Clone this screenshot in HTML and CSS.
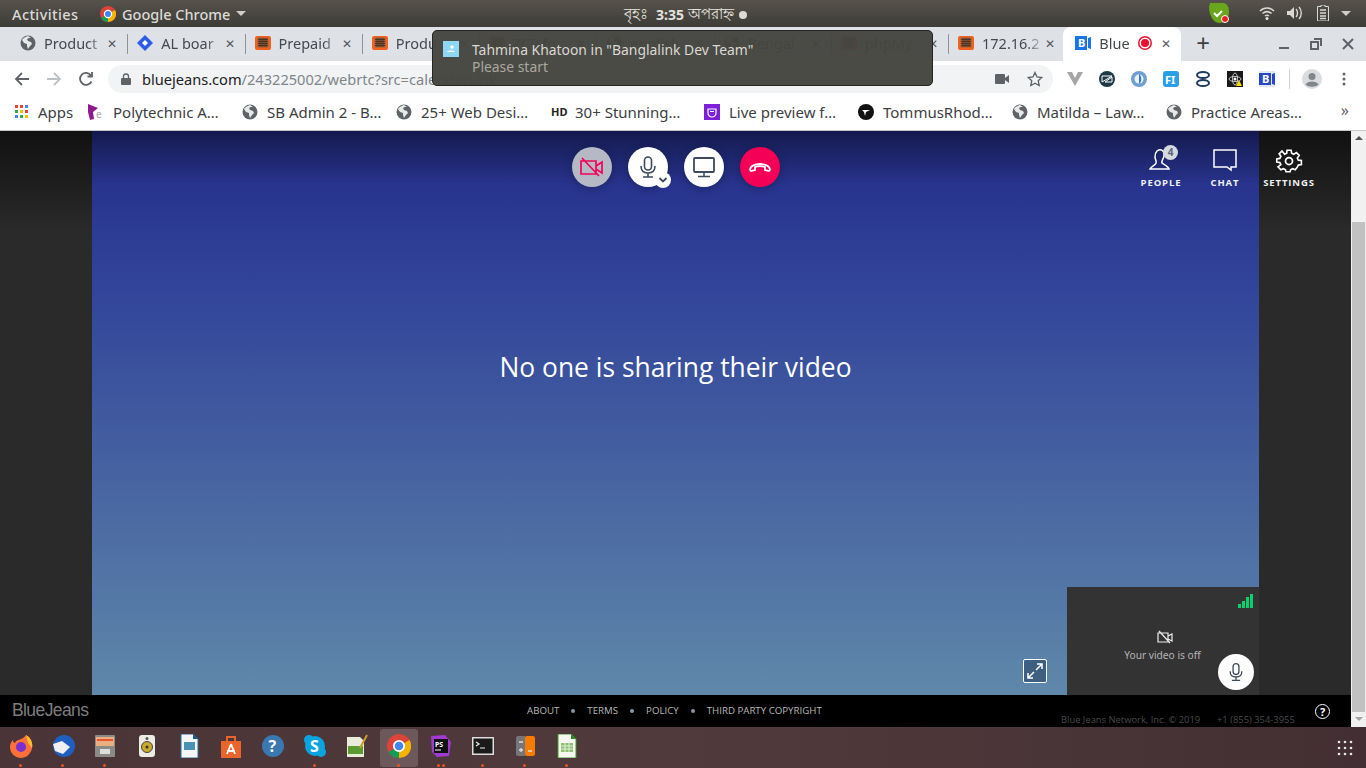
FILE: index.html
```html
<!DOCTYPE html>
<html lang="en">
<head>
    <meta charset="UTF-8">
    <title>BlueJeans</title>
    <link rel="stylesheet" href="styles.css">
</head>
<body>
    <svg class="defs" width="0" height="0">
        <symbol id="globe" viewBox="0 0 16 16"><circle cx="8" cy="8" r="7.5" fill="#5f6368"/><path d="M8 1C5 2 3 3 2 5l2 3 3 1 0 2 1 3 2-3 2-2-1-2-3-1-1-2 2-1 2 0z" fill="#fff" opacity=".85"/></symbol>
        <symbol id="ticket" viewBox="0 0 16 16"><rect y="1" width="16" height="14" rx="2" fill="#f4601e"/><rect x="2.500" y="2.500" width="11" height="10" fill="#9a6238"/><path d="M3 4.500h10M3 6.500h10M3 8.500h10M3 10.500h10M5 3v9M7 3v9M9 3v9M11 3v9" stroke="#3a2a20" stroke-width=".7"/></symbol>
        <symbol id="mic" viewBox="0 0 24 24"><rect x="8.500" y="2" width="7" height="13" rx="3.500" fill="none" stroke="currentColor" stroke-width="1.600"/><path d="M5 11c0 5 3 7 7 7s7-2 7-7M12 18v4M7 22h10" fill="none" stroke="currentColor" stroke-width="1.600"/></symbol>
    </svg>

    <!-- gnome bar -->
    <header class="topbar">
        <span class="activities">Activities</span>
        <span class="app-menu">
            <svg width="16" height="16" viewBox="0 0 16 16"><circle cx="8" cy="8" r="8" fill="#db4437"/><path d="M8 8L1 12a8 8 0 0 0 7 4z" fill="#0f9d58"/><path d="M8 8l7-4a8 8 0 0 1-3 11l-4 1z" fill="#f4b400"/><circle cx="8" cy="8" r="3.600" fill="#4285f4" stroke="#fff" stroke-width="1.200"/></svg>
            Google Chrome
            <i class="caret"></i>
        </span>
        <span class="clock"><span class="bn">বৃহঃ</span> <b>3:35</b> <span class="bn">অপরাহ্ন</span><i class="clock-dot"></i></span>
        <span class="tray">
            <svg class="tray-shield" width="24" height="24" viewBox="0 0 24 24"><path d="M3 2h13c4 0 6 4 6 9 0 6-4 11-10 11C6 22 2 13 2 6z" fill="#6aa51e"/><path d="M7 12l3 3 5-5" fill="none" stroke="#fff" stroke-width="2"/><circle cx="18" cy="18" r="3.500" fill="#e52020" stroke="#fff"/></svg>
            <svg class="tray-wifi" width="16" height="14" viewBox="0 0 16 14"><path d="M1 5c4-4 10-4 14 0M3.500 7.500c3-2.500 6-2.500 9 0M6 10c1.300-1 2.700-1 4 0" fill="none" stroke="#d8d8d4" stroke-width="1.500"/><circle cx="8" cy="12.500" r="1.500" fill="#e8e8e4"/></svg>
            <svg class="tray-vol" width="16" height="14" viewBox="0 0 16 14"><path d="M0 5h3l4-4v12l-4-4H0z" fill="#d8d8d4"/><path d="M9 3c2 2 2 6 0 8M12 1c3 3 3 9 0 12" fill="none" stroke="#d8d8d4" stroke-width="1.400"/></svg>
            <svg class="tray-batt" width="12" height="16" viewBox="0 0 12 16"><path d="M4 0h4v1.500h3.500V16H.5V1.500H4z" fill="none" stroke="#d8d8d4"/><path d="M3 5h6M3 8h6M3 11h6M3 13.500h6" stroke="#d8d8d4" stroke-width="1.500"/></svg>
            <i class="caret"></i>
        </span>
    </header>

    <!-- chrome tabs -->
    <nav class="tabstrip">
        <div class="tab"><svg class="fav"><use href="#globe"/></svg><span class="tab-title">Product</span><span class="tab-x">✕</span></div>
        <div class="tab"><svg class="fav" viewBox="0 0 16 16"><path d="M8 0l8 8-8 8-8-8z" fill="#2f5bea"/><path d="M8 5l3 3-3 3-3-3z" fill="#fff"/></svg><span class="tab-title">AL boar</span><span class="tab-x">✕</span></div>
        <div class="tab"><svg class="fav"><use href="#ticket"/></svg><span class="tab-title">Prepaid</span><span class="tab-x">✕</span></div>
        <div class="tab"><svg class="fav"><use href="#ticket"/></svg><span class="tab-title">Produ</span><span class="tab-x">✕</span></div>
        <div class="tab tab-under"><svg class="fav"><use href="#ticket"/></svg><span class="tab-title">ZCP fo</span><span class="tab-x">✕</span></div>
        <div class="tab tab-under"><svg class="fav"><use href="#globe"/></svg><span class="tab-title">english</span><span class="tab-x">✕</span></div>
        <div class="tab tab-under"><svg class="fav"><use href="#globe"/></svg><span class="tab-title">Bengal</span><span class="tab-x">✕</span></div>
        <div class="tab tab-under"><svg class="fav"><use href="#ticket"/></svg><span class="tab-title">phpMy</span><span class="tab-x">✕</span></div>
        <div class="tab"><svg class="fav"><use href="#ticket"/></svg><span class="tab-title">172.16.2</span><span class="tab-x">✕</span></div>
        <div class="tab tab-active"><svg class="fav" viewBox="0 0 16 16"><rect width="12" height="14" y="1" fill="#1a73e8"/><path d="M13 3l3-1v12l-3-1z" fill="#1a73e8"/><text x="3" y="12" class="fav-b">B</text></svg><span class="tab-title">Blue</span><i class="rec"></i><span class="tab-x">✕</span></div>
        <span class="newtab">+</span>
        <span class="winbtns">
            <svg width="12" height="12" viewBox="0 0 12 12"><path d="M1 10h10" stroke="#5f6368" stroke-width="2"/></svg>
            <svg width="12" height="12" viewBox="0 0 12 12"><path d="M4 1h7v7M1 4h7v7H1z" fill="none" stroke="#5f6368" stroke-width="2"/></svg>
            <svg width="12" height="12" viewBox="0 0 12 12"><path d="M1 1l10 10M11 1L1 11" stroke="#5f6368" stroke-width="2"/></svg>
        </span>
    </nav>

    <!-- chrome toolbar -->
    <div class="toolbar">
        <svg class="navbtn" viewBox="0 0 16 16"><path d="M15 8H2M8 2L2 8l6 6" fill="none" stroke="#5f6368" stroke-width="1.800"/></svg>
        <svg class="navbtn" viewBox="0 0 16 16"><path d="M1 8h13M8 2l6 6-6 6" fill="none" stroke="#bdc1c6" stroke-width="1.800"/></svg>
        <svg class="navbtn" viewBox="0 0 16 16"><path d="M13.500 10.500A6 6 0 1 1 13 4.500M14 1v4.500H9.500" fill="none" stroke="#5f6368" stroke-width="1.800"/></svg>
        <div class="omnibox">
            <svg class="lock" width="10" height="12" viewBox="0 0 10 12"><path d="M2.500 5V3.500a2.500 2.500 0 0 1 5 0V5" fill="none" stroke="#5f6368" stroke-width="1.300"/><rect y="5" width="10" height="7" rx="1" fill="#5f6368"/></svg>
            <span class="url"><span class="url-host">bluejeans.com</span>/243225002/webrtc?src=calendarLink</span>
            <svg class="omni-cam" width="14" height="10" viewBox="0 0 14 10"><rect width="10" height="10" rx="1" fill="#5f6368"/><path d="M10 4l4-3v8l-4-3z" fill="#5f6368"/></svg>
            <svg class="omni-star" width="16" height="16" viewBox="0 0 16 16"><path d="M8 1.500l2 4.500 4.800.5-3.600 3.200 1 4.800L8 12.200l-4.200 2.300 1-4.800L1.200 6.500 6 6z" fill="none" stroke="#5f6368" stroke-width="1.300"/></svg>
        </div>
        <div class="exts">
            <svg viewBox="0 0 16 16"><path d="M0 1h5l3 6 3-6h5l-8 14z" fill="#a6a6a6"/></svg>
            <svg viewBox="0 0 16 16"><circle cx="8" cy="8" r="8" fill="#1f3a47"/><path d="M3 11V5h10zM13 6v5H6z" fill="none" stroke="#fff"/></svg>
            <svg viewBox="0 0 16 16"><circle cx="8" cy="8" r="8" fill="#6f9fd0"/><circle cx="8" cy="8" r="4.500" fill="#e8f0f8"/><path d="M8 3c3 2 3 8 0 10z" fill="#3c78b5"/></svg>
            <svg viewBox="0 0 16 16"><rect width="16" height="16" rx="3" fill="#2b9fe6"/><text x="2" y="12.500" class="ext-txt">FI</text></svg>
            <svg viewBox="0 0 16 16"><ellipse cx="8" cy="4" rx="6" ry="3" fill="none" stroke="#1f3a5f" stroke-width="2"/><ellipse cx="8" cy="12" rx="6" ry="3" fill="none" stroke="#1f3a5f" stroke-width="2"/></svg>
            <svg viewBox="0 0 16 16"><rect width="16" height="16" fill="#1a1a1a"/><circle cx="8" cy="8" r="1.500" fill="#fff"/><ellipse cx="8" cy="8" rx="6" ry="2.500" fill="none" stroke="#fff" stroke-width=".7"/><ellipse cx="8" cy="8" rx="2.500" ry="6" fill="none" stroke="#fff" stroke-width=".7"/><path d="M12 9l3 6H9z" fill="#f5d90a"/></svg>
            <svg viewBox="0 0 16 16"><rect width="16" height="16" fill="#dfe8f5"/><rect y="2" width="12" height="12" fill="#2747c9"/><path d="M13 3l3-1v12l-3-1z" fill="#2747c9"/><text x="3" y="12" class="fav-b">B</text></svg>
        </div>
        <i class="tool-sep"></i>
        <svg class="avatar" width="20" height="20" viewBox="0 0 20 20"><circle cx="10" cy="10" r="10" fill="#dadce0"/><circle cx="10" cy="7.500" r="3.500" fill="#80868b"/><path d="M3.500 15.500c2-4 11-4 13 0-3 3-10 3-13 0z" fill="#80868b"/></svg>
        <svg class="kebab" width="4" height="14" viewBox="0 0 4 14"><circle cx="2" cy="2" r="1.500" fill="#5f6368"/><circle cx="2" cy="7" r="1.500" fill="#5f6368"/><circle cx="2" cy="12" r="1.500" fill="#5f6368"/></svg>
    </div>

    <!-- bookmarks -->
    <div class="bookmarks">
        <span class="bm bm-apps">
            <svg class="bm-ico" viewBox="0 0 14 14"><g fill="#ea4335"><rect width="3" height="3"/><rect x="5" width="3" height="3"/></g><rect x="10" width="3" height="3" fill="#4285f4"/><rect y="5" width="3" height="3" fill="#34a853"/><rect x="5" y="5" width="3" height="3" fill="#fbbc05"/><rect x="10" y="5" width="3" height="3" fill="#ea4335"/><rect y="10" width="3" height="3" fill="#4285f4"/><rect x="5" y="10" width="3" height="3" fill="#34a853"/><rect x="10" y="10" width="3" height="3" fill="#fbbc05"/></svg>Apps</span>
        <span class="bm"><svg class="bm-ico" viewBox="0 0 16 16"><path d="M0 0l10 4-5 4 1 7-4 1-2-8z" fill="#8e1a8e"/><text x="8" y="14" class="bm-e">e</text></svg>Polytechnic A…</span>
        <span class="bm"><svg class="bm-ico"><use href="#globe"/></svg>SB Admin 2 - B…</span>
        <span class="bm"><svg class="bm-ico"><use href="#globe"/></svg>25+ Web Desi…</span>
        <span class="bm"><b class="bm-hd">HD</b>30+ Stunning…</span>
        <span class="bm"><svg class="bm-ico" viewBox="0 0 16 16"><rect width="16" height="16" fill="#7b1fd8"/><path d="M4 5h8v4a4 4 0 0 1-8 0z" fill="none" stroke="#fff" stroke-width="1.200"/><path d="M6 7.500h4" stroke="#fff"/></svg>Live preview f…</span>
        <span class="bm"><svg class="bm-ico" viewBox="0 0 16 16"><circle cx="8" cy="8" r="8" fill="#111"/><path d="M4 6h8L8 8l-1 4-1-4z" fill="#fff"/></svg>TommusRhod…</span>
        <span class="bm"><svg class="bm-ico"><use href="#globe"/></svg>Matilda – Law…</span>
        <span class="bm"><svg class="bm-ico"><use href="#globe"/></svg>Practice Areas…</span>
        <span class="bm-more">»</span>
    </div>

    <!-- notification over chrome -->
    <div class="notify">
        <span class="notify-icon"><svg width="10" height="8" viewBox="0 0 10 8"><circle cx="6" cy="2" r="1.800" fill="#fff"/><path d="M1 7c0-2 8-2 8 0z" fill="#fff"/></svg></span>
        <div>
            <div class="notify-title">Tahmina Khatoon in "Banglalink Dev Team"</div>
            <div class="notify-body">Please start</div>
        </div>
    </div>

    <div class="page">
        <div class="app">
            <main class="meeting">
                <aside class="side"></aside>
                <section class="stage">
                    <div class="controls">
                        <button class="ctl ctl-off">
                            <svg width="26" height="22" viewBox="0 0 26 22"><path d="M2 5h15v13H2zM17 10l6-4v11l-6-4M3 2l17 18" fill="none" stroke="#f50057" stroke-width="1.700"/></svg>
                        </button>
                        <button class="ctl ctl-mic">
                            <svg width="24" height="24"><use href="#mic"/></svg>
                            <span class="mic-more"><svg width="10" height="8" viewBox="0 0 10 8"><path d="M1.500 2l3.500 3.500L8.500 2" fill="none" stroke="#3d4a5c" stroke-width="1.800"/></svg></span>
                        </button>
                        <button class="ctl">
                            <svg width="24" height="24" viewBox="0 0 24 24"><rect x="2" y="3" width="20" height="14" rx="1" fill="none" stroke="currentColor" stroke-width="1.800"/><path d="M12 17v4M6 21.500h12" stroke="currentColor" stroke-width="1.500"/></svg>
                        </button>
                        <button class="ctl ctl-end">
                            <svg width="24" height="12" viewBox="0 0 24 12"><path d="M2 9c0-8 20-8 20 0l-1 1-4-1V6C14 5 10 5 7 6v3l-4 1z" fill="none" stroke="#fff" stroke-width="1.800"/></svg>
                        </button>
                    </div>
                    <p class="no-video">No one is sharing their video</p>
                    <span class="expand">
                        <svg width="16" height="16" viewBox="0 0 16 16"><path d="M9 7l6-6M10 1h5v5M7 9l-6 6M1 10v5h5" fill="none" stroke="#fff" stroke-width="1.500"/></svg>
                    </span>
                    <div class="selfview">
                        <span class="signal"><i class="s1"></i><i class="s2"></i><i class="s3"></i><i class="s4"></i></span>
                        <svg class="self-cam" width="16" height="14" viewBox="0 0 16 14"><path d="M1 3h10v9H1zM11 6l4-2v7l-4-2M2 1l11 12" fill="none" stroke="#eee" stroke-width="1.200"/></svg>
                        <span class="self-text">Your video is off</span>
                        <span class="self-mic"><svg width="20" height="20"><use href="#mic"/></svg></span>
                    </div>
                </section>
                <aside class="side"></aside>
                <div class="actions">
                    <div class="action">
                        <svg width="28" height="28" viewBox="0 0 28 28"><path d="M10 4c4-3 8 0 7 5-.5 3-3 5-2 7 1 1 6 3 7 6H3c1-3 6-4 6-6 1-2-1-3-1-6 0-3 1-5 2-6z" fill="none" stroke="#fff" stroke-width="1.500"/></svg>
                        <span class="badge">4</span>
                        PEOPLE
                    </div>
                    <div class="action">
                        <svg width="28" height="28" viewBox="0 0 28 28"><path d="M3 3h22v17h-5v3l-4-3H3z" fill="none" stroke="#fff" stroke-width="1.500"/></svg>
                        CHAT
                    </div>
                    <div class="action">
                        <svg width="28" height="28" viewBox="0 0 24 24"><path d="M10 2h4l.5 3 2 1 2.600-1.700 2.800 2.800L20 9.700l1 2 3 .3v4l-3 .5-1 2-2 2.500-2.500-1-2 1-.5 2h-4l-.5-2-2-1-2.500 1-2.800-2.800L4 16l-1-2-3-.5v-3l3-.5 1-2-1.700-2.500 2.800-2.800L7.700 6l2-1z" transform="translate(1.500 1) scale(.88)" fill="none" stroke="#fff" stroke-width="1.600"/><circle cx="12" cy="12" r="3" fill="none" stroke="#fff" stroke-width="1.500"/></svg>
                        SETTINGS
                    </div>
                </div>
            </main>
            <footer class="foot">
                <span class="logo">BlueJeans</span>
                <nav class="foot-links">
                    <span>ABOUT</span><i></i><span>TERMS</span><i></i><span>POLICY</span><i></i><span>THIRD PARTY COPYRIGHT</span>
                </nav>
                <span class="legal">Blue Jeans Network, Inc. © 2019</span>
                <span class="phone">+1 (855) 354-3955</span>
                <span class="help">?</span>
            </footer>
        </div>
        <div class="scrollbar">
            <i class="arrow-up"></i>
            <div class="thumb"></div>
            <i class="arrow-down"></i>
        </div>
    </div>

    <!-- dock -->
    <footer class="dock">
        <span class="dock-item dot"><svg viewBox="0 0 24 24"><path d="M17 1c5 3 7 8 6 13-1 6-6 10-11 10S1 20 1 13c0-3 1-5 3-7 0 2 1 3 2 3 1-3 4-3 6-4 2-1 4-2 5-4z" fill="#ff7139"/><path d="M17 1c5 3 7 8 6 13l-4-5z" fill="#ffbd2e"/><circle cx="12" cy="13" r="5" fill="#7a2fd0"/></svg></span>
        <span class="dock-item dot"><svg viewBox="0 0 24 24"><circle cx="13" cy="12" r="11" fill="#1f5fbf"/><path d="M2 10l9-3 8 6-7 7-8-3z" fill="#f0f0f0"/></svg></span>
        <span class="dock-item dot"><svg viewBox="0 0 24 24"><rect x="2" y="1" width="20" height="22" rx="1" fill="#8a8a86"/><rect x="3" y="3" width="18" height="9" fill="#e8b080"/><path d="M4 6h16" stroke="#e8552c" stroke-width="2"/><rect x="7" y="15" width="10" height="5" fill="#ddd"/></svg></span>
        <span class="dock-item"><svg viewBox="0 0 24 24"><rect x="4" y="1" width="16" height="22" rx="3" fill="#ecebe4"/><circle cx="12" cy="13" r="5.500" fill="#c9a82c" stroke="#444"/><circle cx="12" cy="13" r="1.500" fill="#333"/><circle cx="12" cy="4.500" r="1.500" fill="#555"/></svg></span>
        <span class="dock-item"><svg viewBox="0 0 24 24"><path d="M4 0h12l5 5v19H4z" fill="#f4f6f8" stroke="#2a6f9c"/><path d="M16 0l5 5h-5z" fill="#1a5a88"/><rect x="7" y="8" width="11" height="8" fill="#4a90b8"/></svg></span>
        <span class="dock-item"><svg viewBox="0 0 24 24"><path d="M2 7h20v17H2z" fill="#e8662c"/><path d="M8 8V3h8v5" fill="none" stroke="#e8662c" stroke-width="2"/><path d="M12 10l-4 10M12 10l4 10M8 17h8" stroke="#fff" stroke-width="1.800"/></svg></span>
        <span class="dock-item"><svg viewBox="0 0 24 24"><circle cx="12" cy="12" r="11" fill="#3a78b0"/><text x="7.500" y="18" class="dock-q">?</text></svg></span>
        <span class="dock-item dot"><svg viewBox="0 0 24 24"><circle cx="12" cy="12" r="10" fill="#0aa5e0"/><circle cx="6" cy="6" r="5" fill="#0aa5e0"/><circle cx="18" cy="18" r="5" fill="#0aa5e0"/><text x="7" y="18" class="dock-s">S</text></svg></span>
        <span class="dock-item"><svg viewBox="0 0 24 24"><path d="M2 3h13l4 4v16H2z" fill="#e8ecd8"/><path d="M3 12h15v8H3z" fill="#5a9a30"/><path d="M22 1l-7 13" stroke="#c89a30" stroke-width="2"/></svg></span>
        <span class="dock-item dock-active dot"><svg viewBox="0 0 24 24"><circle cx="12" cy="12" r="12" fill="#db4437"/><path d="M12 12L1.500 18A12 12 0 0 0 12 24z" fill="#0f9d58"/><path d="M12 12l10.500-6A12 12 0 0 1 17 23l-5 1z" fill="#f4b400"/><circle cx="12" cy="12" r="5.200" fill="#4285f4" stroke="#fff" stroke-width="1.800"/></svg></span>
        <span class="dock-item dot dot-two"><svg viewBox="0 0 24 24"><path d="M2 2l14-1 6 7-2 14-12 1-5-5z" fill="#a03ad0"/><rect x="5" y="5" width="14" height="14" fill="#111"/><text x="6" y="13" class="dock-ps">PS</text><path d="M6 16h6" stroke="#fff"/></svg></span>
        <span class="dock-item dot"><svg viewBox="0 0 24 24"><rect x="1" y="3" width="22" height="18" fill="#ddd"/><rect x="2.500" y="4.500" width="19" height="15" fill="#1a1a1a"/><path d="M5 8l3 2-3 2M9 14h5" fill="none" stroke="#eee" stroke-width="1.200"/></svg></span>
        <span class="dock-item dot"><svg viewBox="0 0 24 24"><rect x="3" y="2" width="10" height="20" rx="2" fill="#76767a"/><rect x="12" y="2" width="10" height="20" rx="2" fill="#f57c00"/><path d="M6 8h4M6 16h4M8 14v4M15 17h4" stroke="#ddd" stroke-width="1.300"/></svg></span>
        <span class="dock-item dot"><svg viewBox="0 0 24 24"><path d="M3 0h13l5 5v19H3z" fill="#f4f8ee" stroke="#3a9a30"/><path d="M16 0l5 5h-5z" fill="#2a8a20"/><path d="M6 9h12v9H6z" fill="#8dc070"/><path d="M6 12h12M6 15h12M10 9v9M14 9v9" stroke="#fff" stroke-width=".7"/></svg></span>
        <svg class="dock-grid" width="16" height="16" viewBox="0 0 16 16"><g fill="#e8e8e8"><circle cx="2" cy="2" r="1.300"/><circle cx="8" cy="2" r="1.300"/><circle cx="14" cy="2" r="1.300"/><circle cx="2" cy="8" r="1.300"/><circle cx="8" cy="8" r="1.300"/><circle cx="14" cy="8" r="1.300"/><circle cx="2" cy="14" r="1.300"/><circle cx="8" cy="14" r="1.300"/><circle cx="14" cy="14" r="1.300"/></g></svg>
    </footer>
</body>
</html>
```

FILE: styles.css
```css
html, body {
    margin: 0;
    height: 100%;
    overflow: hidden;
}
body {
    width: 1366px;
    height: 768px;
    display: flex;
    flex-direction: column;
    position: relative;
    font-family: "Noto Sans", "Open Sans", sans-serif;
    background: #000;
}
.defs {
    position: absolute;
}

/* gnome bar */
.topbar {
    height: 27px;
    flex: none;
    display: flex;
    align-items: center;
    position: relative;
    background: linear-gradient(#57534c, #3c3b37);
    color: #dcdad5;
    font-size: 14.500px;
    font-weight: 500;
    padding-left: 12px;
}
.activities {
    width: 88px;
    letter-spacing: .4px;
}
.app-menu {
    display: flex;
    align-items: center;
    gap: 6px;
}
.caret {
    width: 0;
    height: 0;
    border-left: 5px solid transparent;
    border-right: 5px solid transparent;
    border-top: 5px solid #d0cec8;
}
.clock {
    position: absolute;
    left: 624px;
    top: 2px;
    display: flex;
    align-items: center;
    gap: 8px;
    font-size: 14px;
    color: #e4e2dd;
}
.clock .bn {
    font-size: 15px;
    font-weight: 400;
}
.clock b + .bn {
    margin-left: -4px;
}
.clock-dot {
    width: 8px;
    height: 8px;
    border-radius: 50%;
    background: #dcdad5;
    margin-left: -3px;
}
.tray {
    position: absolute;
    left: 1207px;
    top: 1px;
    display: flex;
    align-items: center;
}
.tray-wifi {
    margin-left: 28px;
}
.tray-vol {
    margin-left: 12px;
}
.tray-batt {
    margin-left: 14px;
}
.tray .caret {
    margin-left: 12px;
}

/* chrome */
.tabstrip {
    height: 34px;
    flex: none;
    display: flex;
    padding-left: 8px;
    background: #dee1e6;
    position: relative;
    color: #45494e;
    font-size: 14.500px;
}
.tab {
    width: 117.250px;
    flex: none;
    box-sizing: border-box;
    display: flex;
    align-items: center;
    padding: 0 8px 2px 12px;
    position: relative;
}
.tab + .tab::before {
    content: "";
    position: absolute;
    left: 2px;
    top: 7px;
    height: 20px;
    width: 1px;
    background: #8f9296;
}
.fav {
    width: 16px;
    height: 16px;
    flex: none;
}
.fav-b {
    font-size: 11px;
    font-weight: 700;
    fill: #fff;
}
.tab-title {
    margin-left: 8px;
    flex: 1;
    white-space: nowrap;
    -webkit-mask-image: linear-gradient(to right, #000 70%, transparent);
    mask-image: linear-gradient(to right, #000 70%, transparent);
}
.tab-x {
    font-size: 12px;
    color: #55585c;
}
.tab-active {
    background: #fff;
    border-radius: 8px 8px 0 0;
    width: 118px;
    padding-right: 10px;
}
.tab-active::before {
    display: none;
}
.rec {
    width: 8px;
    height: 8px;
    border-radius: 50%;
    flex: none;
    background: #e8112d;
    box-shadow: 0 0 0 1.500px #fff, 0 0 0 3px #e8112d;
    margin-right: 12px;
}
.newtab {
    margin-left: 15px;
    font-size: 24px;
    line-height: 32px;
    color: #3c4043;
}
.winbtns {
    position: absolute;
    right: 12px;
    top: 11px;
    display: flex;
    gap: 20px;
}
.toolbar {
    height: 35px;
    flex: none;
    display: flex;
    align-items: center;
    background: #fff;
    padding-left: 14px;
    box-sizing: border-box;
}
.navbtn {
    width: 16px;
    height: 16px;
    margin-right: 16px;
    flex: none;
}
.omnibox {
    margin-left: -2px;
    width: 945px;
    height: 28px;
    flex: none;
    border-radius: 14px;
    background: #f1f3f4;
    display: flex;
    align-items: center;
    padding-left: 13px;
    box-sizing: border-box;
    font-size: 14.600px;
    color: #80868b;
}
.url {
    margin-left: 11px;
    flex: 1;
    white-space: nowrap;
}
.url-host {
    color: #202124;
}
.omni-star {
    margin: 0 10px 0 18px;
}
.exts {
    display: flex;
    gap: 16px;
    margin-left: 14px;
}
.exts svg {
    width: 16px;
    height: 16px;
}
.ext-txt {
    font-size: 11px;
    font-weight: 700;
    fill: #fff;
}
.tool-sep {
    width: 1px;
    height: 20px;
    background: #d0d2d6;
    margin: 0 12px 0 14px;
}
.avatar {
    margin-right: 20px;
}
.bookmarks {
    height: 35px;
    flex: none;
    box-sizing: border-box;
    display: flex;
    align-items: center;
    background: #fff;
    border-bottom: 1px solid #c4c6ca;
    font-size: 15px;
    color: #3c4043;
    padding: 0 0 3px 14px;
    position: relative;
}
.bm {
    width: 154px;
    flex: none;
    display: flex;
    align-items: center;
    gap: 9px;
    white-space: nowrap;
}
.bm-apps {
    width: 75px;
    gap: 9px;
}
.bm-ico {
    width: 16px;
    height: 16px;
    flex: none;
    margin-left: -1px;
}
.bm-apps .bm-ico {
    width: 14px;
    height: 14px;
    margin-left: 1px;
}
.bm-e {
    font-size: 10px;
    fill: #aaa;
}
.bm-hd {
    font-size: 11px;
    color: #222;
    width: 15px;
}
.bm-more {
    position: absolute;
    right: 17px;
    top: 3px;
    font-size: 16px;
    color: #5f6368;
}

/* notification */
.notify {
    position: absolute;
    left: 432px;
    top: 30px;
    width: 501px;
    height: 56px;
    box-sizing: border-box;
    background: rgba(69, 69, 64, .97);
    border: 1px solid #26251f;
    border-radius: 5px;
    display: flex;
    padding: 8px 10px;
    gap: 13px;
    font-size: 13.900px;
    line-height: 17px;
    color: #dbd9d3;
}
.notify-icon {
    width: 16px;
    height: 16px;
    margin-top: 2px;
    flex: none;
    background: #8fd8f5;
    display: flex;
    align-items: center;
    justify-content: center;
}
.notify-title {
    margin-top: 2px;
}
.notify-body {
    color: #aaa89e;
}

/* bluejeans */
.page {
    flex: 1;
    display: flex;
    min-height: 0;
}
.app {
    flex: 1;
    display: flex;
    flex-direction: column;
    min-width: 0;
}
.meeting {
    flex: 1;
    display: flex;
    position: relative;
    min-height: 0;
}
.side {
    width: 92px;
    flex: none;
    background: linear-gradient(#111 0, #2a2a2a 100px, #2a2a2a 100%);
}
.stage {
    flex: 1;
    position: relative;
    display: flex;
    flex-direction: column;
    align-items: center;
    background: linear-gradient(#141a4e 0, #28348f 55px, #33469a 170px, #5f88aa 100%);
}
.controls {
    display: flex;
    gap: 16px;
    margin-top: 16px;
}
.ctl {
    width: 40px;
    height: 40px;
    border: 0;
    padding: 0;
    border-radius: 50%;
    background: #fff;
    color: #3d4a5c;
    display: flex;
    align-items: center;
    justify-content: center;
    position: relative;
    box-shadow: 0 2px 8px rgba(0, 0, 0, .25);
}
.ctl-off {
    background: #b4b9c5;
}
.ctl-end {
    background: #f50057;
}
.mic-more {
    position: absolute;
    right: -3px;
    bottom: -1px;
    width: 16px;
    height: 16px;
    border-radius: 50%;
    background: #fff;
    display: flex;
    align-items: center;
    justify-content: center;
}
.no-video {
    margin: 165px 0 0;
    font-family: "Open Sans", sans-serif;
    font-size: 26.400px;
    line-height: 30px;
    color: #fff;
}
.expand {
    position: absolute;
    left: 931px;
    top: 528px;
    width: 22px;
    height: 22px;
    border: 1px solid #fff;
    border-radius: 2px;
    background: #3f5f80;
    display: flex;
    align-items: center;
    justify-content: center;
}
.selfview {
    position: absolute;
    right: 0;
    bottom: 0;
    width: 192px;
    height: 108px;
    background: #333;
    display: flex;
    flex-direction: column;
    align-items: center;
    color: #b5b5b5;
    font-size: 10.200px;
}
.self-cam {
    margin-top: 43px;
    margin-left: 4px;
}
.self-text {
    margin-top: 4px;
    margin-right: 1px;
}
.signal {
    position: absolute;
    right: 6px;
    top: 7px;
    display: flex;
    align-items: flex-end;
    gap: 1px;
    height: 14px;
}
.signal i {
    width: 3px;
    background: #0bd06e;
}
.s1 { height: 4px; }
.s2 { height: 7px; }
.s3 { height: 11px; }
.s4 { height: 14px; }
.self-mic {
    position: absolute;
    right: 5px;
    bottom: 5px;
    width: 36px;
    height: 36px;
    border-radius: 50%;
    background: #fff;
    color: #3d4a5c;
    display: flex;
    align-items: center;
    justify-content: center;
}
.actions {
    position: absolute;
    right: 30px;
    top: 16px;
    display: flex;
}
.action {
    width: 64px;
    display: flex;
    flex-direction: column;
    align-items: center;
    position: relative;
    font-family: "Open Sans", sans-serif;
    font-size: 9.500px;
    font-weight: 700;
    letter-spacing: .9px;
    line-height: 15px;
    color: #eef0f5;
}
.badge {
    position: absolute;
    left: 34px;
    top: -2px;
    width: 15px;
    height: 15px;
    border-radius: 50%;
    background: #d5d9e0;
    color: #5a6578;
    font-size: 10px;
    letter-spacing: 0;
    line-height: 15px;
    text-align: center;
}
.foot {
    height: 32px;
    flex: none;
    position: relative;
    background: #000;
}
.logo {
    position: absolute;
    left: 12px;
    top: 5px;
    font-family: "Liberation Sans", sans-serif;
    font-size: 17.500px;
    letter-spacing: -.6px;
    color: #7d7d7d;
}
.foot-links {
    position: absolute;
    left: 527px;
    top: 9px;
    display: flex;
    align-items: center;
    gap: 12px;
    font-family: "Open Sans", sans-serif;
    font-size: 9.700px;
    line-height: 14px;
    color: #b8b8b8;
}
.foot-links i {
    width: 4px;
    height: 4px;
    border-radius: 50%;
    background: #8b94a5;
}
.legal, .phone {
    position: absolute;
    top: 18px;
    font-family: "Open Sans", sans-serif;
    font-size: 9.400px;
    line-height: 13px;
    color: #4a4a4a;
}
.legal {
    left: 1061px;
}
.phone {
    left: 1217px;
}
.help {
    position: absolute;
    left: 1315px;
    top: 9px;
    width: 13px;
    height: 13px;
    border: 1.500px solid #fff;
    border-radius: 50%;
    color: #fff;
    font-size: 11px;
    font-weight: 700;
    line-height: 13px;
    text-align: center;
}
.scrollbar {
    width: 15px;
    flex: none;
    background: #f1f1f1;
    display: flex;
    flex-direction: column;
    align-items: center;
}
.arrow-up, .arrow-down {
    width: 0;
    height: 0;
    border-left: 4px solid transparent;
    border-right: 4px solid transparent;
}
.arrow-up {
    margin-top: 5px;
    border-bottom: 4px solid #505050;
}
.arrow-down {
    margin-top: 5px;
    border-top: 4px solid #a3a3a3;
}
.thumb {
    width: 13px;
    margin-top: 82px;
    height: 490px;
    background: #c1c1c1;
}

/* dock */
.dock {
    height: 41px;
    flex: none;
    display: flex;
    align-items: center;
    position: relative;
    background: linear-gradient(90deg, #4a3437, #503a3c 50%, #432f33);
}
.dock-item {
    width: 42px;
    height: 38px;
    flex: none;
    display: flex;
    justify-content: center;
    align-items: center;
    box-sizing: border-box;
    position: relative;
    margin-top: 1px;
}
.dock-item svg {
    width: 24px;
    height: 24px;
    margin-bottom: 4px;
}
.dock-active::before {
    content: "";
    position: absolute;
    left: 2px;
    right: 2px;
    top: 0;
    bottom: 0;
    border-radius: 3px;
    background: rgba(255, 255, 255, .17);
}
.dock-active svg {
    position: relative;
}
.dot::after {
    content: "";
    position: absolute;
    left: 19px;
    bottom: 0;
    width: 3px;
    height: 3px;
    border-radius: 50%;
    background: #e95420;
}
.dot-two::after {
    left: 17px;
    box-shadow: 5px 0 0 #e95420;
}
.dock-q, .dock-s {
    font-size: 16px;
    font-weight: 700;
    fill: #fff;
}
.dock-ps {
    font-size: 7px;
    font-weight: 700;
    fill: #fff;
}
.dock-grid {
    position: absolute;
    right: 13px;
    top: 13px;
}
```
